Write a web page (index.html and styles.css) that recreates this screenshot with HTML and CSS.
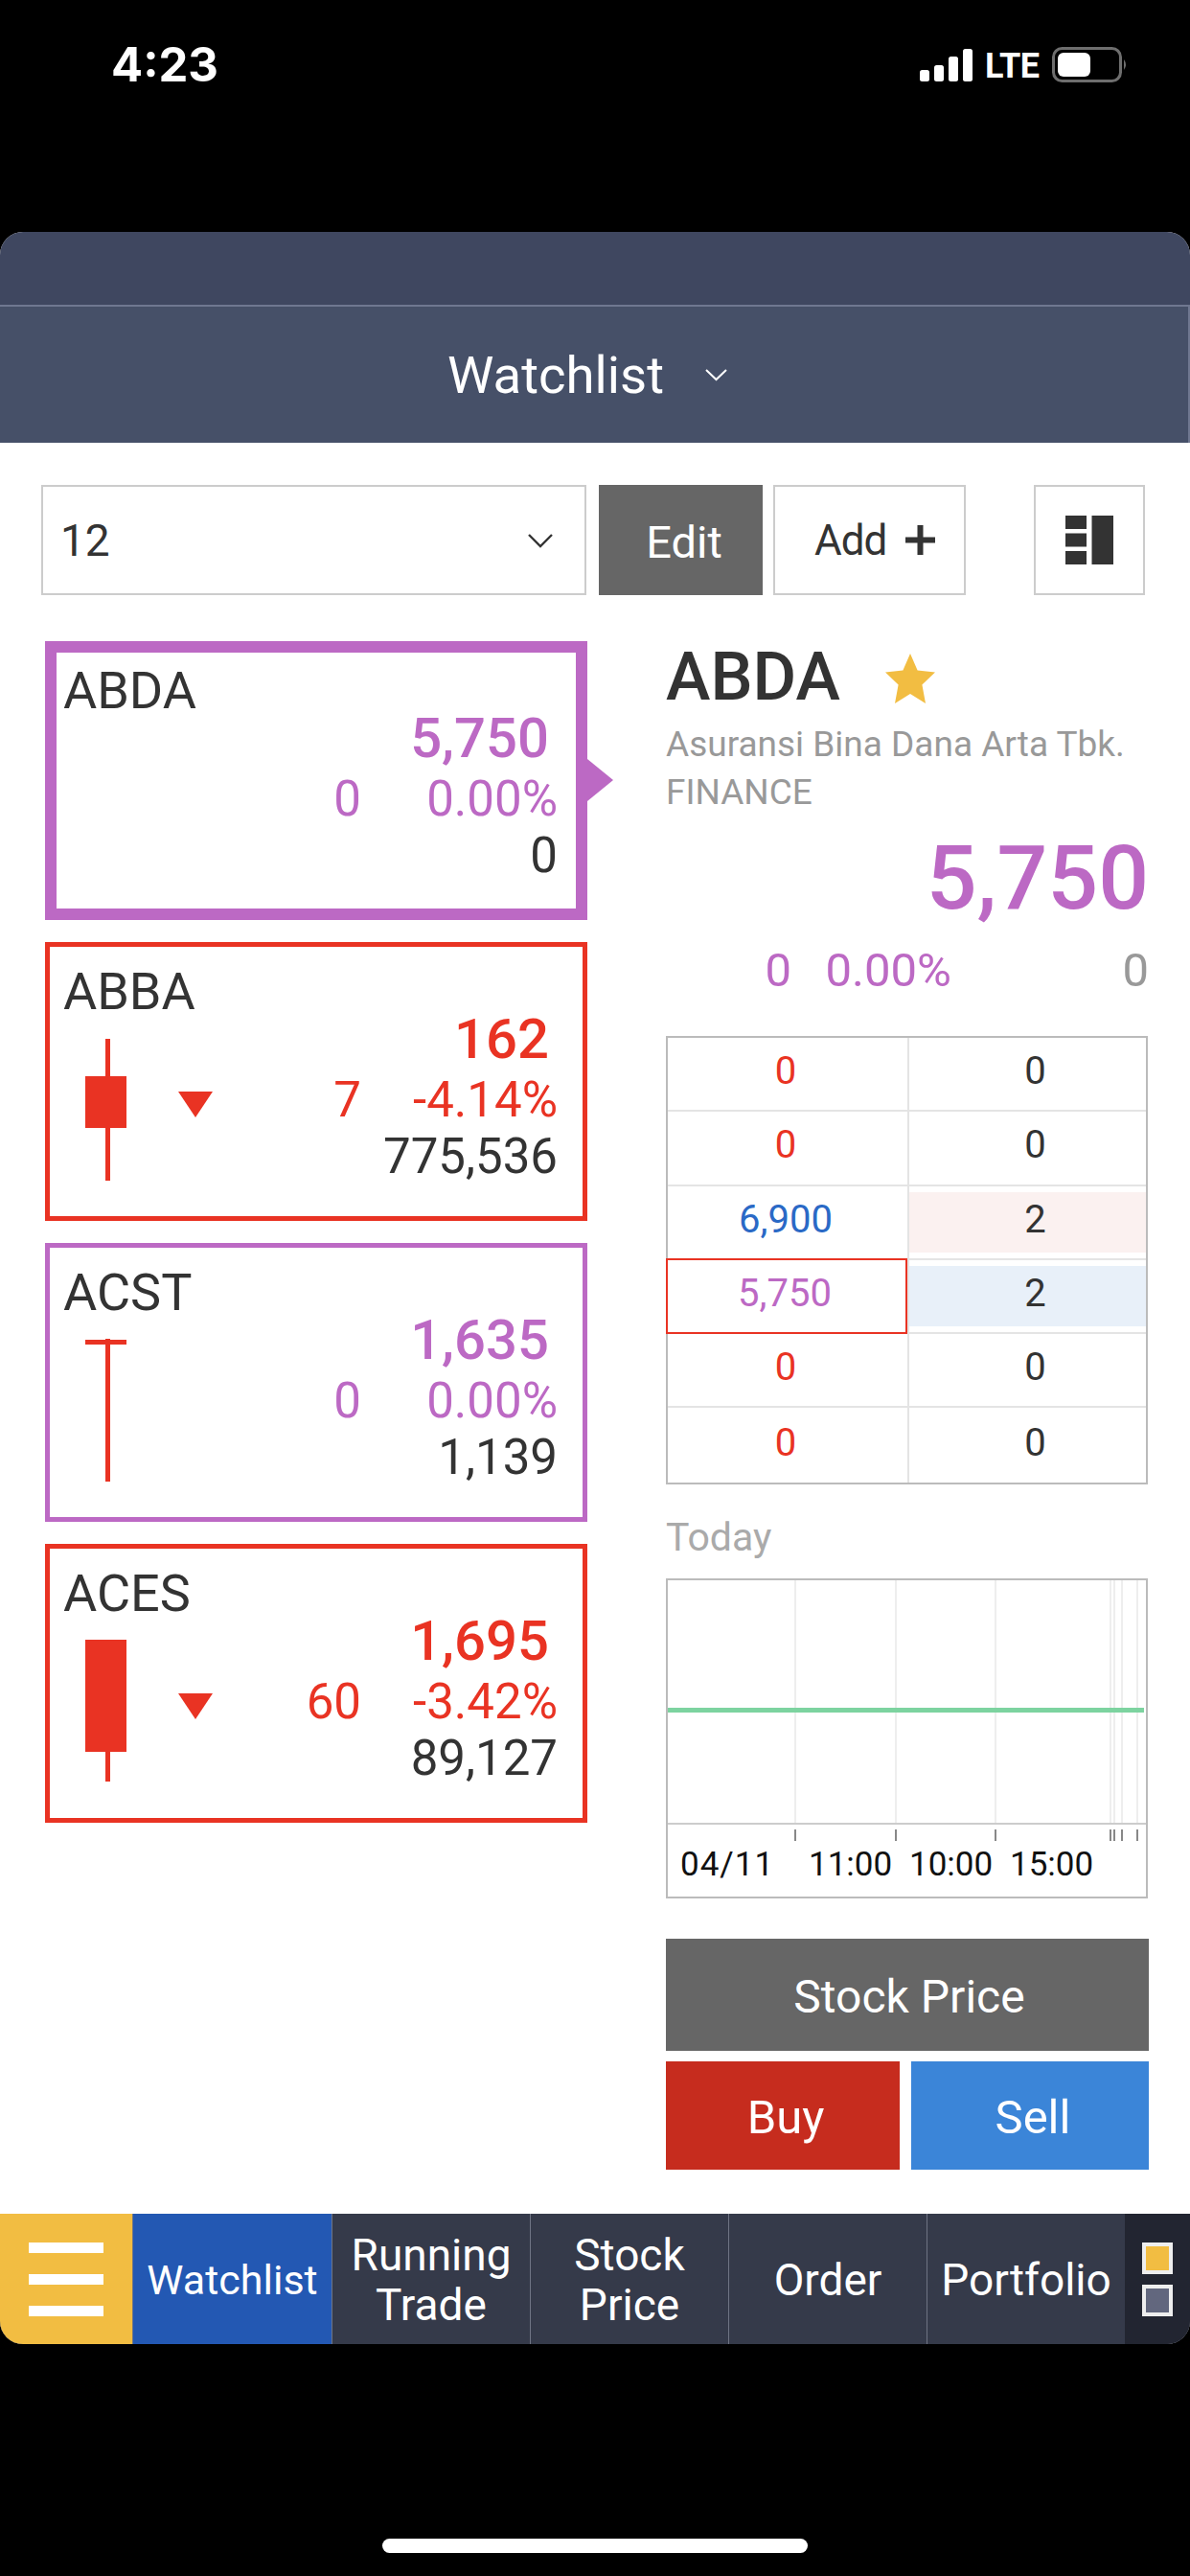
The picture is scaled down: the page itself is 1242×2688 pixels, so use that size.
FILE: index.html
```html
<!DOCTYPE html>
<html lang="en">
<head>
<meta charset="utf-8">
<title>Watchlist</title>
<link rel="stylesheet" href="styles.css">
</head>
<body>
<div class="phone">
  <header class="status">
    <span class="time">4:23</span>
    <div class="status-right">
      <svg class="signal" width="55" height="34" viewBox="0 0 55 34"><rect x="0" y="22" width="10" height="12" rx="2.5"/><rect x="15" y="17" width="10" height="17" rx="2.5"/><rect x="30" y="8" width="10" height="26" rx="2.5"/><rect x="45" y="0" width="10" height="34" rx="2.5"/></svg>
      <span class="lte">LTE</span>
      <svg class="battery" width="79" height="38" viewBox="0 0 79 38"><rect x="1.5" y="1.5" width="70" height="34" rx="9" fill="none" stroke="#6e6e6e" stroke-width="3"/><rect x="6" y="6" width="34" height="25" rx="6" fill="#fff"/><path d="M75 13 q4 5.500 0 11z" fill="#6e6e6e"/></svg>
    </div>
  </header>

  <div class="app">
    <div class="app-top"></div>
    <div class="app-title">
      <span>Watchlist</span>
      <svg class="chev" width="25" height="14" viewBox="0 0 25 14"><path d="M2 2 L12.500 12 L23 2" fill="none" stroke="#fff" stroke-width="2"/></svg>
    </div>

    <main class="content">
      <div class="toolbar">
        <div class="select">
          <span>12</span>
          <svg width="28" height="16" viewBox="0 0 28 16"><path d="M2 2 L14 14 L26 2" fill="none" stroke="#333" stroke-width="2.400"/></svg>
        </div>
        <div class="btn-edit">Edit</div>
        <div class="btn-add"><span class="add-label">Add</span><svg width="31" height="31" viewBox="0 0 31 31"><path d="M15.500 0v31M0 15.500h31" stroke="#333" stroke-width="6"/></svg></div>
        <div class="btn-layout">
          <svg width="50" height="51" viewBox="0 0 50 51"><path fill="#333" d="M0 0h22v14H0zM0 18.500h22v14H0zM0 37h22v14H0zM27.500 0h22.500v51H27.500z"/></svg>
        </div>
      </div>

      <div class="columns">
        <section class="cards">
          <article class="card card-active purple">
            <div class="sym">ABDA</div>
            <div class="price">5,750</div>
            <div class="change"><span class="chg">0</span><span class="pct">0.00%</span></div>
            <div class="vol">0</div>
          </article>

          <article class="card red">
            <div class="sym">ABBA</div>
            <div class="candle"><i class="wick wick-abba"></i><i class="body body-abba"></i></div>
            <i class="tri"></i>
            <div class="price">162</div>
            <div class="change"><span class="chg">7</span><span class="pct">-4.14%</span></div>
            <div class="vol">775,536</div>
          </article>

          <article class="card purple">
            <div class="sym">ACST</div>
            <div class="candle"><i class="wick wick-acst"></i><i class="body body-acst"></i></div>
            <div class="price">1,635</div>
            <div class="change"><span class="chg">0</span><span class="pct">0.00%</span></div>
            <div class="vol">1,139</div>
          </article>

          <article class="card red">
            <div class="sym">ACES</div>
            <div class="candle"><i class="wick wick-aces"></i><i class="body body-aces"></i></div>
            <i class="tri"></i>
            <div class="price">1,695</div>
            <div class="change"><span class="chg">60</span><span class="pct">-3.42%</span></div>
            <div class="vol">89,127</div>
          </article>
        </section>

        <section class="detail">
          <div class="detail-head">
            <h1>ABDA</h1>
            <svg width="52" height="52" viewBox="0 0 52 52"><path fill="#f2bd42" d="M26 0l7.600 17.600L52 19.600 38.400 32.400 42 52 26 42 10 52l3.600-19.600L0 19.600l18.400-2z"/></svg>
          </div>
          <div class="co-name">Asuransi Bina Dana Arta Tbk.</div>
          <div class="co-sector">FINANCE</div>
          <div class="big-price">5,750</div>
          <div class="big-change"><span class="bc-chg">0</span><span class="bc-pct">0.00%</span><span class="bc-vol">0</span></div>

          <div class="book">
            <div class="cell ask">0</div><div class="cell">0</div>
            <div class="cell ask">0</div><div class="cell">0</div>
            <div class="cell blue">6,900</div><div class="cell shade-red">2</div>
            <div class="cell current">5,750</div><div class="cell shade-blue">2</div>
            <div class="cell ask">0</div><div class="cell">0</div>
            <div class="cell ask">0</div><div class="cell">0</div>
          </div>

          <div class="today">Today</div>
          <div class="chart">
            <div class="plot">
              <i class="grid g1"></i><i class="grid g2"></i><i class="grid g3"></i><i class="grid g4"></i><i class="grid g5"></i><i class="grid g6"></i><i class="grid g7"></i>
              <i class="line"></i>
            </div>
            <div class="axis">
              <i class="tick g1"></i><i class="tick g2"></i><i class="tick g3"></i><i class="tick g4"></i><i class="tick g5"></i><i class="tick g6"></i><i class="tick g7"></i>
              <span class="lbl l1">04/11</span><span class="lbl l2">11:00</span><span class="lbl l3">10:00</span><span class="lbl l4">15:00</span>
            </div>
          </div>

          <div class="btn-stock">Stock Price</div>
          <div class="trade">
            <div class="btn-buy">Buy</div>
            <div class="btn-sell">Sell</div>
          </div>
        </section>
      </div>
    </main>

    <nav class="tabs">
      <div class="menu"><i></i><i></i><i></i></div>
      <div class="tab tab-active">Watchlist</div>
      <div class="tab">Running<br>Trade</div>
      <div class="tab">Stock<br>Price</div>
      <div class="tab">Order</div>
      <div class="tab">Portfolio</div>
      <div class="side"><i class="sq-on"></i><i class="sq-off"></i></div>
    </nav>
  </div>

  <div class="home"><i></i></div>
</div>
</body>
</html>
```
FILE: styles.css
```css
* { box-sizing: border-box; }
html, body { margin: 0; padding: 0; background: #000; }
body { font-family: Roboto, "Liberation Sans", sans-serif; color: #333; }
i { display: block; }
.phone { width: 1242px; height: 2688px; display: flex; flex-direction: column; background: #000; overflow: hidden; }

/* status bar */
.status { height: 242px; padding: 44px 65px 0 116px; display: flex; justify-content: space-between; align-items: flex-start; color: #fff; }
.time { font-family: Inter, Roboto, sans-serif; font-size: 49px; line-height: 48px; font-weight: 700; }
.status-right { display: flex; align-items: center; margin-top: 5px; height: 38px; }
.signal { fill: #fff; margin-right: 13px; }
.lte { font-size: 36px; font-weight: 700; line-height: 38px; letter-spacing: -0.5px; margin-right: 13px; margin-top: 2px; width: 57px; white-space: nowrap; }

/* app shell */
.app { width: 1242px; height: 2204px; background: #fff; border-radius: 24px; overflow: hidden; display: flex; flex-direction: column; }
.app-top { height: 78px; background: #3f4760; border-bottom: 2px solid #6f7790; }
.app-title { height: 142px; background: #465068; color: #fff; display: flex; align-items: center; justify-content: center; gap: 42px; font-size: 54.5px; padding-right: 13px; border-right: 2px solid #6f7790; }
.content { flex: 1; padding: 44px 43px 0 43px; min-height: 0; }

/* toolbar */
.toolbar { display: flex; height: 115px; }
.select { width: 569px; border: 2px solid #ccc; display: flex; align-items: center; justify-content: space-between; padding: 0 32px 0 18px; font-size: 46px; }
.btn-edit { width: 171px; margin-left: 13px; padding: 3px 0 0 7px; background: #666; color: #fff; font-size: 47px; display: flex; align-items: center; justify-content: center; }
.btn-add { width: 201px; margin-left: 11px; border: 2px solid #ccc; display: flex; align-items: center; gap: 21px; padding-left: 41px; font-size: 44px; }
.add-label { width: 74px; letter-spacing: -1px; white-space: nowrap; }
.btn-layout { width: 116px; margin-left: 71px; border: 2px solid #ccc; display: flex; align-items: center; justify-content: center; }

/* layout columns */
.columns { display: flex; margin-top: 48px; }
.cards { width: 570px; margin-left: 4px; display: flex; flex-direction: column; gap: 23px; }
.detail { width: 504px; margin-left: 79px; }

/* cards */
.card { position: relative; width: 566px; height: 291px; border: 5px solid; background: #fff; }
.card.red { border-color: #e93323; }
.card.purple { border-color: #bc69c4; }
.card-active { border-width: 12px; }
.sym { position: absolute; left: 14px; top: 16px; font-size: 54px; line-height: 62px; color: #333; }
.card-active .sym { left: 7px; top: 9px; }
.price, .change, .vol { position: absolute; right: 26px; white-space: nowrap; }
.price { top: 63px; right: 35px; font-size: 58px; line-height: 66px; font-weight: 500; }
.change { top: 131px; font-size: 51px; line-height: 58px; display: flex; }
.vol { top: 190px; font-size: 51px; line-height: 58px; color: #333; }
.card-active .price { top: 56px; right: 28px; }
.card-active .change { top: 124px; right: 19px; }
.card-active .vol { top: 183px; right: 19px; }
.chg { position: absolute; right: 205px; }
.red .price, .red .change { color: #e93323; }
.purple .price, .purple .change { color: #bc69c4; }

/* candles */
.candle { position: absolute; left: 37px; top: 0; width: 43px; height: 100%; }
.wick { position: absolute; left: 21px; width: 5px; background: #e93323; }
.body { position: absolute; left: 0; width: 43px; background: #e93323; }
.wick-abba { top: 96px; height: 148px; }
.body-abba { top: 135px; height: 54px; }
.wick-acst { top: 95px; height: 149px; }
.body-acst { top: 96px; height: 5px; }
.wick-aces { top: 95px; height: 148px; }
.body-aces { top: 95px; height: 117px; }
.tri { position: absolute; left: 134px; top: 151px; width: 0; height: 0; border-left: 18px solid transparent; border-right: 18px solid transparent; border-top: 27px solid #e93323; }
.card-active::after { content: ""; position: absolute; right: -39px; top: 111px; width: 0; height: 0; border-top: 22px solid transparent; border-bottom: 22px solid transparent; border-left: 27px solid #bc69c4; }

/* detail header */
.detail-head { display: flex; align-items: flex-start; height: 72px; }
.detail-head h1 { margin: 2px 0 0; font-size: 70px; line-height: 70px; font-weight: 500; color: #333; width: 229px; }
.detail-head svg { margin-top: 13px; }
.co-name { margin-top: 11px; font-size: 37px; line-height: 50px; color: #999; white-space: nowrap; }
.co-sector { font-size: 37px; line-height: 50px; color: #999; }
.big-price { text-align: right; font-size: 93px; line-height: 100px; font-weight: 500; color: #bc69c4; margin-top: 15px; }
.big-change { position: relative; height: 60px; margin-top: 16px; font-size: 49px; line-height: 60px; color: #bc69c4; }
.bc-chg { position: absolute; right: 373px; }
.bc-pct { position: absolute; right: 206px; }
.bc-vol { position: absolute; right: 0; color: #999; }

/* order book */
.book { margin-top: 38px; width: 503px; border: 2px solid #bbb; display: grid; grid-template-columns: 250px 1fr; grid-auto-rows: 77.3px; }
.cell { display: flex; align-items: center; justify-content: center; padding-bottom: 6px; font-size: 40px; color: #333; border-bottom: 2px solid #e4e4e4; background-clip: padding-box; }
.cell:nth-child(odd) { padding-right: 4px; }
.cell:nth-child(even) { padding-left: 16px; border-left: 2px solid #e4e4e4; }
.cell:nth-last-child(-n+2) { border-bottom: 0; }
.ask { color: #e93323; }
.blue { color: #2a69c6; }
.shade-red { background-color: #fbf1f0; box-shadow: inset 0 6px 0 #fff, inset 0 -6px 0 #fff; }
.shade-blue { background-color: #e8f0f9; box-shadow: inset 0 6px 0 #fff, inset 0 -6px 0 #fff; }
.cell.current { color: #bc69c4; border: 2px solid #e93323; margin: -2px 0 0 -2px; }

/* chart */
.today { margin-top: 30px; font-size: 41px; line-height: 50px; color: #aaa; }
.chart { margin-top: 18px; width: 503px; height: 334px; border: 2px solid #bbb; }
.plot { position: relative; height: 255px; border-bottom: 2px solid #ccc; }
.axis { position: relative; height: 75px; }
.grid { position: absolute; top: 0; bottom: 0; width: 1.5px; background: #eee; }
.tick { position: absolute; top: 5px; height: 12px; width: 2px; background: #888; }
.g1 { left: 132px; } .g2 { left: 237px; } .g3 { left: 341px; } .g4 { left: 461px; } .g5 { left: 465px; } .g6 { left: 473px; } .g7 { left: 489px; }
.line { position: absolute; left: 0; right: 2px; top: 133px; height: 5px; background: #7dd3a0; }
.lbl { position: absolute; top: 21px; font-size: 35px; line-height: 42px; color: #111; white-space: nowrap; }
.l1 { left: 13px; letter-spacing: 1px; } .l2 { left: 147px; } .l3 { left: 252px; } .l4 { left: 357px; }

/* actions */
.btn-stock { margin-top: 42px; width: 504px; height: 117px; padding: 4px 0 0 4px; background: #666; color: #fff; font-size: 48px; display: flex; align-items: center; justify-content: center; }
.trade { display: flex; margin-top: 11px; gap: 12px; height: 113px; width: 504px; }
.btn-buy, .btn-sell { padding: 4px 0 0 6px; color: #fff; font-size: 49px; display: flex; align-items: center; justify-content: center; }
.btn-buy { width: 244px; background: #c62c1e; }
.btn-sell { width: 248px; background: #3b85d8; }

/* tabs */
.tabs { height: 136px; display: flex; background: #353a4a; color: #fff; flex-shrink: 0; }
.menu { width: 138px; background: #f2bd42; display: flex; flex-direction: column; justify-content: center; gap: 22px; padding: 0 30px; }
.menu i { height: 11px; background: #fff; }
.tab { width: 207px; padding-top: 2px; border-left: 1.5px solid #6f7484; display: flex; align-items: center; justify-content: center; text-align: center; font-size: 46px; line-height: 52px; white-space: nowrap; }
.tab-active { background: #2358b3; width: 208px; font-size: 43px; }
.side { flex: 1; background: #222531; display: flex; flex-direction: column; align-items: center; justify-content: center; gap: 11px; }
.side i { width: 32px; height: 33px; border: 4px solid #eee; }
.sq-on { background: #f2bd42; }
.sq-off { background: #62677e; }

/* home indicator */
.home { height: 242px; display: flex; align-items: flex-start; justify-content: center; padding-top: 203px; }
.home i { width: 444px; height: 15px; background: #fff; border-radius: 8px; }
```
